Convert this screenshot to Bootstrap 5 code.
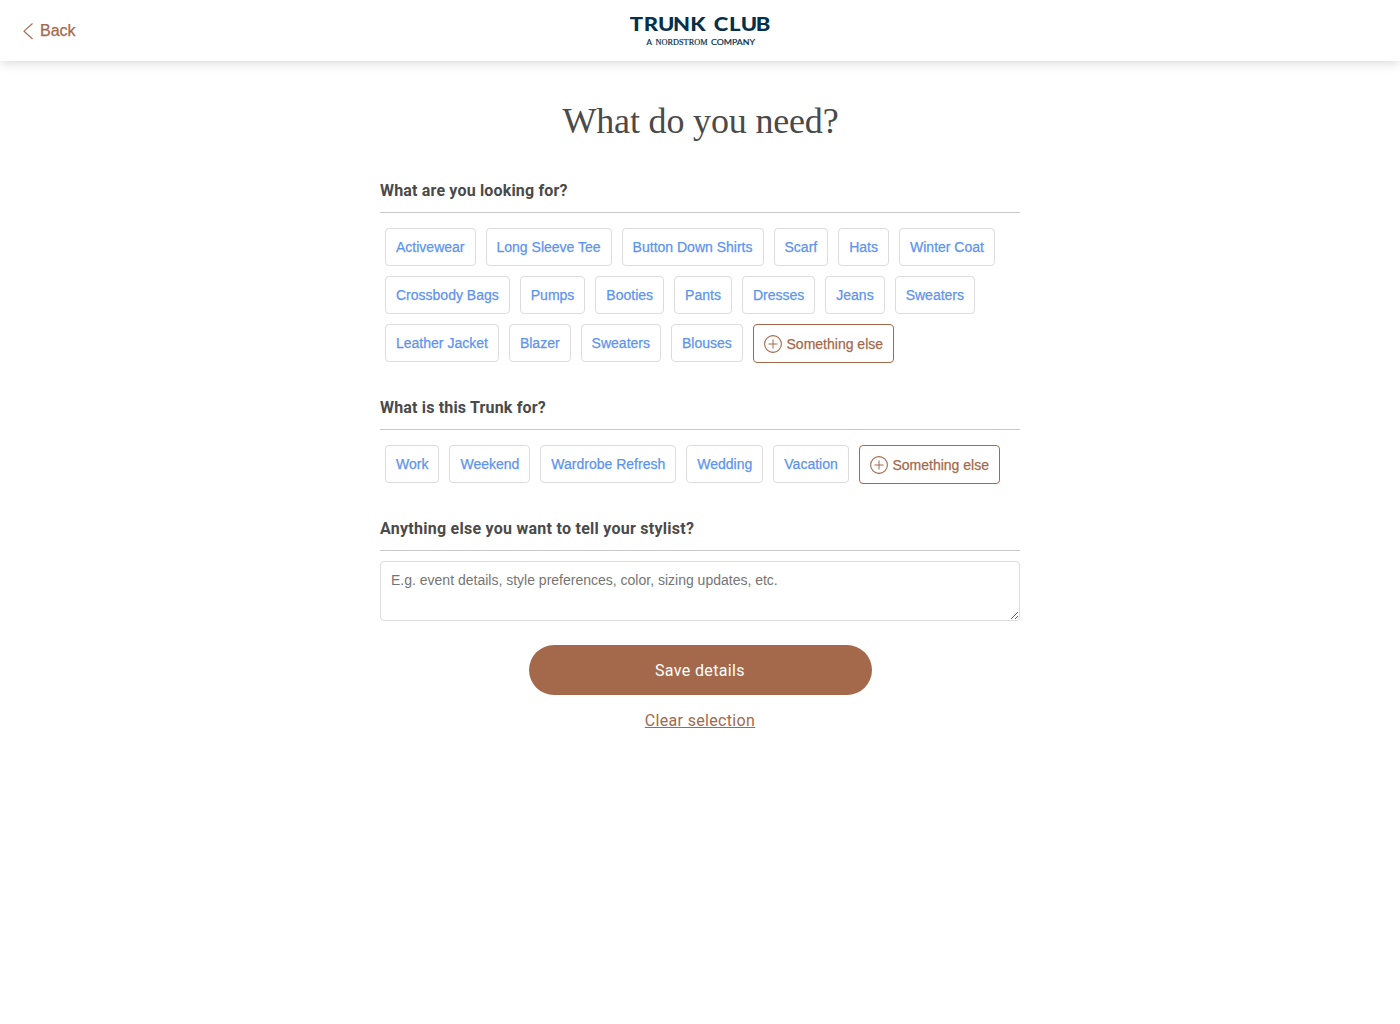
<!DOCTYPE html>
<html lang="en">
<head>
<meta charset="utf-8">
<meta name="viewport" content="width=device-width, initial-scale=1">
<title>Trunk Club</title>
<link href="https://cdn.jsdelivr.net/npm/bootstrap@5.3.0/dist/css/bootstrap.min.css" rel="stylesheet">
<style>
  body { font-family: "Liberation Sans", Arial, sans-serif; color: #4a4a4a; background: #fff; }
  .site-header { height: 61px; box-shadow: 0 0 12px rgba(0,0,0,.2); }
  .back-link { color: #a4694b; font-size: 16px; line-height: 20px; width: 300px; padding-left: 22px; gap: 6px; }
  .back-link span { -webkit-text-stroke: .25px currentColor; }
  .header-end { width: 300px; }
  .need-form { width: 640px; }
  .page-title { font-family: "Liberation Serif", serif; font-size: 36px; line-height: 44px; font-weight: 400; letter-spacing: -.17px; margin: 38px 0 37px; padding-left: 1px; }
  .section-title { font-family: Roboto, sans-serif; font-size: 16px; line-height: 22px; font-weight: 700; letter-spacing: .17px; height: 33px; margin: 0 0 10px; border-bottom: 1px solid #c8c8c8; }
  .section-title.wide-title { letter-spacing: .26px; }
  .chip-list { margin-bottom: 29px; }
  .chip { height: 38px; margin: 5px; padding: 0 10px; border: 1px solid #dcdcdc; border-radius: 4px; background: #fff; color: #5c94f0; font-size: 14px; line-height: 36px; letter-spacing: .003px; white-space: nowrap; -webkit-text-stroke: .25px currentColor; }
  .chip-other { height: 39px; border-color: #a4694b; color: #a4694b; gap: 4.7px; }
  .notes { height: 60px; padding: 9px 10px; border: 1px solid #dcdcdc; border-radius: 4px; font-size: 14px; line-height: 19px; }
  .notes::placeholder { color: #757575; }
  .save-btn { width: 343px; height: 50px; background: #a4694b; color: #fff; font-family: Roboto, sans-serif; font-size: 16px; letter-spacing: .36px; margin-top: 24px; padding-top: 2px; }
  .clear-link { color: #a4694b; font-family: Roboto, sans-serif; font-size: 16px; line-height: 24px; letter-spacing: .33px; margin-top: 14px; }
</style>
<script src="https://cdn.jsdelivr.net/npm/bootstrap@5.3.0/dist/js/bootstrap.bundle.min.js"></script>
</head>
<body>
<header class="site-header d-flex align-items-center justify-content-between bg-white">
  <a href="#" class="back-link d-flex align-items-center text-decoration-none">
    <svg width="12" height="18" viewBox="0 0 12 18" fill="none" stroke="#a4694b" stroke-width="1.1"><path d="M10.5 1.5 L2 9.2 L10.5 17"/></svg>
    <span>Back</span>
  </a>
  <svg width="144" height="45" viewBox="0 -4.500 144 45" fill="#05304b" role="img" aria-label="Trunk Club, a Nordstrom company">
    <g transform="scale(1.13 1)" font-family="Lato" font-weight="900" font-size="19.500">
      <text x="1.500 14 26.500 39.900 55" y="18">TRUNK</text>
      <text x="75.900 89.300 99.700 113" y="18">CLUB</text>
    </g>
    <g stroke="#05304b" stroke-width=".2">
      <text x="18.500" y="32.500" font-family="Lato" font-size="8">A</text>
      <text x="27.500" y="32.500" font-family="Liberation Serif" font-size="8.600" textLength="52" lengthAdjust="spacingAndGlyphs">NORDSTROM</text>
      <text x="83" y="32.500" font-family="Lato" font-size="8" textLength="44" lengthAdjust="spacingAndGlyphs">COMPANY</text>
    </g>
  </svg>
  <div class="header-end"></div>
</header>

<main class="need-form mx-auto">
  <h1 class="page-title text-center"><span>What do you need?</span></h1>

  <h2 class="section-title"><span>What are you looking for?</span></h2>
  <div class="chip-list d-flex flex-wrap align-items-start">
    <button class="chip">Activewear</button>
    <button class="chip">Long Sleeve Tee</button>
    <button class="chip">Button Down Shirts</button>
    <button class="chip">Scarf</button>
    <button class="chip">Hats</button>
    <button class="chip">Winter Coat</button>
    <button class="chip">Crossbody Bags</button>
    <button class="chip">Pumps</button>
    <button class="chip">Booties</button>
    <button class="chip">Pants</button>
    <button class="chip">Dresses</button>
    <button class="chip">Jeans</button>
    <button class="chip">Sweaters</button>
    <button class="chip">Leather Jacket</button>
    <button class="chip">Blazer</button>
    <button class="chip">Sweaters</button>
    <button class="chip">Blouses</button>
    <button class="chip chip-other d-flex align-items-center">
      <svg width="18" height="18" viewBox="0 0 18 18" fill="none" stroke="#a4694b"><circle cx="9" cy="9" r="8.400" stroke-width="1.100"/><path d="M9 4.500V13.500M4.500 9H13.500" stroke-width="1"/></svg>
      <span>Something else</span>
    </button>
  </div>

  <h2 class="section-title"><span>What is this Trunk for?</span></h2>
  <div class="chip-list d-flex flex-wrap align-items-start">
    <button class="chip">Work</button>
    <button class="chip">Weekend</button>
    <button class="chip">Wardrobe Refresh</button>
    <button class="chip">Wedding</button>
    <button class="chip">Vacation</button>
    <button class="chip chip-other d-flex align-items-center">
      <svg width="18" height="18" viewBox="0 0 18 18" fill="none" stroke="#a4694b"><circle cx="9" cy="9" r="8.400" stroke-width="1.100"/><path d="M9 4.500V13.500M4.500 9H13.500" stroke-width="1"/></svg>
      <span>Something else</span>
    </button>
  </div>

  <h2 class="section-title wide-title"><span>Anything else you want to tell your stylist?</span></h2>
  <textarea class="notes d-block w-100" placeholder="E.g. event details, style preferences, color, sizing updates, etc."></textarea>

  <div class="d-flex flex-column align-items-center">
    <button class="save-btn border-0 rounded-pill">Save details</button>
    <a href="#" class="clear-link">Clear selection</a>
  </div>
</main>
</body>
</html>
